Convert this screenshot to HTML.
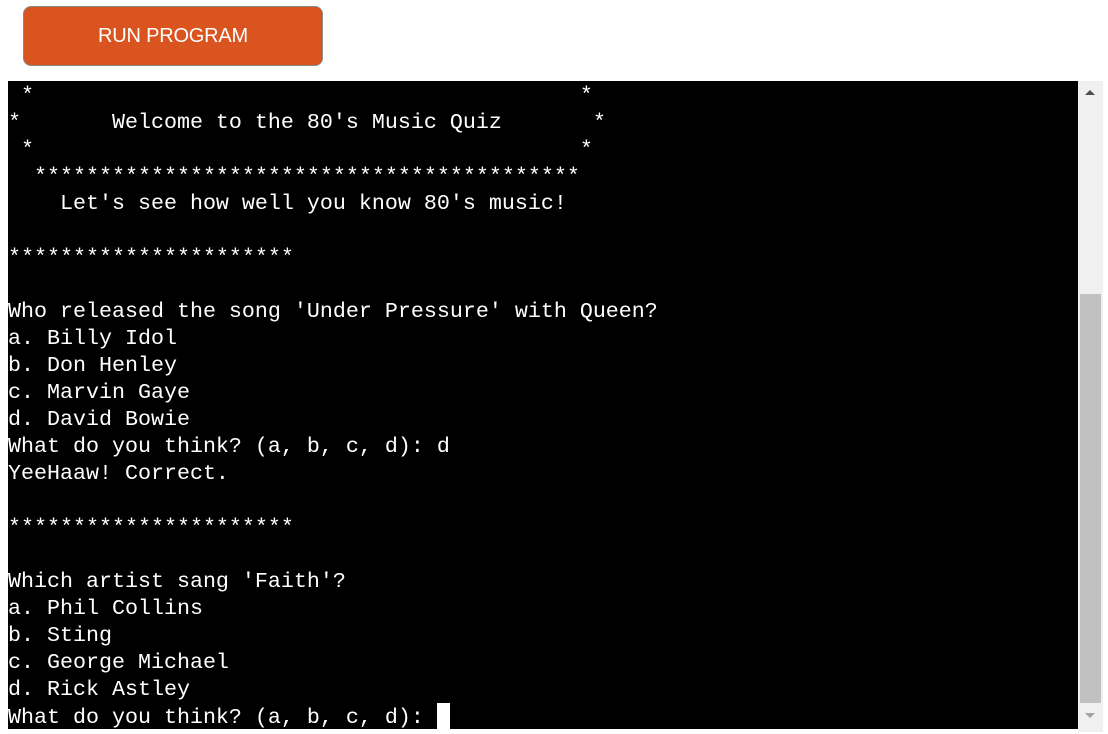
<!DOCTYPE html>
<html><head><style>
body{margin:0;width:1108px;height:734px;background:#fff;position:relative;overflow:hidden}
.btn{position:absolute;left:23px;top:6px;width:300px;height:60px;background:#d9541e;border:1px solid #888;border-radius:8px;box-sizing:border-box;color:#fff;font:20px "Liberation Sans",sans-serif;letter-spacing:-0.2px;text-align:center;line-height:58px}
.term{position:absolute;left:8px;top:81px;width:1070px;height:648px;background:#000}
pre{margin:0;padding-top:1px;color:#fff;font:21.67px/27px "Liberation Mono","Courier New",monospace;white-space:pre}
.cur{display:inline-block;width:13px;height:26px;background:#fff;vertical-align:-6px}
.sb{position:absolute;left:1078px;top:81px;width:25px;height:651px;background:#f0f0f0}
.th{position:absolute;left:2px;top:213px;width:21px;height:409px;background:#c1c1c1}
.up{position:absolute;left:7px;top:9px;border-left:5px solid transparent;border-right:5px solid transparent;border-bottom:5px solid #505050}
.dn{position:absolute;left:7px;top:632px;border-left:5px solid transparent;border-right:5px solid transparent;border-top:5px solid #a3a3a3}
</style></head><body>
<div class="btn">RUN PROGRAM</div>
<div class="term"><pre> *                                          *
*       Welcome to the 80's Music Quiz       *
 *                                          *
  ******************************************
    Let's see how well you know 80's music!

**********************

Who released the song 'Under Pressure' with Queen?
a. Billy Idol
b. Don Henley
c. Marvin Gaye
d. David Bowie
What do you think? (a, b, c, d): d
YeeHaaw! Correct.

**********************

Which artist sang 'Faith'?
a. Phil Collins
b. Sting
c. George Michael
d. Rick Astley
What do you think? (a, b, c, d): <span class="cur"></span></pre></div>
<div class="sb"><div class="up"></div><div class="th"></div><div class="dn"></div></div>
</body></html>
